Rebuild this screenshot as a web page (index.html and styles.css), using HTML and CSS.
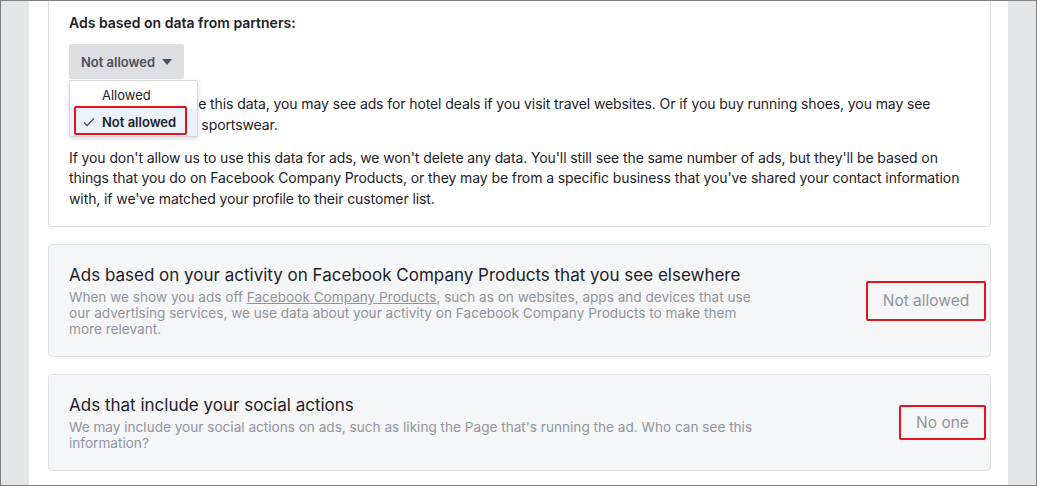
FILE: index.html
```html
<!DOCTYPE html>
<html>
<head>
<meta charset="utf-8">
<link rel="stylesheet" href="styles.css">
</head>
<body>
<div class="frame">
  <div class="gutter"></div>
  <main class="main">
    <section class="card card-top">
      <h3 class="label">Ads based on data from partners:</h3>
      <div class="select-wrap">
        <button class="select">Not allowed <span class="caret"></span></button>
        <div class="menu">
          <div class="menu-item">Allowed</div>
          <div class="menu-item selected">
            <svg class="check" width="12" height="10" viewBox="0 0 12 10"><path d="M1 5.5 L4.2 8.5 L11 1.5" fill="none" stroke="#4b4f56" stroke-width="1.3"/></svg>
            Not allowed
          </div>
          <div class="hl"></div>
        </div>
      </div>
      <p class="para">If you allow us to use this data, you may see ads for hotel deals if you visit travel websites. Or if you buy running shoes, you may see<br>ads from a brand of sportswear.</p>
      <p class="para">If you don't allow us to use this data for ads, we won't delete any data. You'll still see the same number of ads, but they'll be based on things that you do on Facebook Company Products, or they may be from a specific business that you've shared your contact information with, if we've matched your profile to their customer list.</p>
    </section>
    <section class="card card-row">
      <div class="row-text">
        <h4 class="row-title">Ads based on your activity on Facebook Company Products that you see elsewhere</h4>
        <p class="row-desc">When we show you ads off <a class="link">Facebook Company Products</a>, such as on websites, apps and devices that use our advertising services, we use data about your activity on Facebook Company Products to make them more relevant.</p>
      </div>
      <div class="value v1">Not allowed</div>
    </section>
    <section class="card card-row">
      <div class="row-text">
        <h4 class="row-title">Ads that include your social actions</h4>
        <p class="row-desc">We may include your social actions on ads, such as liking the Page that's running the ad. Who can see this information?</p>
      </div>
      <div class="value v2">No one</div>
    </section>
  </main>
  <div class="gutter"></div>
</div>
</body>
</html>
```
FILE: styles.css
```css
html, body { margin: 0; padding: 0; }
body { font-family: Inter, "Liberation Sans", Arial, sans-serif; color: #1d2129; }
.frame {
  width: 1037px; height: 486px; box-sizing: border-box;
  border: 1px solid #7f7f7f; display: flex; overflow: hidden; background: #fff;
}
.gutter { width: 28px; flex: none; background: #e4e5e7; }
.main { flex: 1; padding: 0 17px 0 19px; display: flex; flex-direction: column; gap: 17px; }
.card { border: 1px solid #dddfe2; border-radius: 4px; box-sizing: border-box; }
.card-top { border-top: none; border-radius: 0 0 4px 4px; padding: 13px 20px 17px 20px; }
.label { margin: 0; font-size: 14px; font-weight: 600; line-height: 18px; color: #1d2129; }
.select-wrap { position: relative; margin-top: 12px; height: 35px; }
.select {
  height: 35px; width: 115px; border: none; border-radius: 2px; background: #dcdee2;
  font-family: inherit; font-size: 13px; font-weight: 600; color: #4b4f56;
  padding: 0; display: flex; align-items: center; justify-content: center; gap: 7px;
}
.caret { width: 0; height: 0; border-left: 5px solid transparent; border-right: 5px solid transparent; border-top: 6px solid #4b4f56; margin-top: 1px; }
.menu {
  position: absolute; left: 0; top: 36px; width: 129px; height: 57px; box-sizing: border-box;
  background: #fff; border: 1px solid #d4d6da; border-radius: 2px; box-shadow: 0 2px 4px rgba(0,0,0,0.15);
  padding-top: 2px; z-index: 2;
}
.menu-item { height: 24px; line-height: 24px; font-size: 13px; color: #1d2129; padding-left: 32px; position: relative; }
.menu-item.selected { background: #ecf1fb; font-weight: 600; margin-top: 1px; height: 28px; line-height: 28px; }
.check { position: absolute; left: 13px; top: 9px; }
.hl { position: absolute; left: 4px; top: 25px; width: 113px; height: 29px; box-sizing: border-box; border: 2px solid #e4131e; border-radius: 2px; }
.para { margin: 0; font-size: 14px; letter-spacing: -0.1px; line-height: 20.5px; color: #1d2129; }
.para + .para { margin-top: 12.5px; }
.select-wrap + .para { margin-top: 15px; }
.card-row { background: #f5f6f7; display: flex; align-items: center; padding: 19px 4px 19px 20px; }
.row-text { width: 700px; }
.row-title { margin: 0; font-size: 17px; font-weight: normal; line-height: 22px; color: #1d2129; }
.row-desc { margin: 3px 0 0; font-size: 13.6px; line-height: 16px; color: #90949c; }
.link { color: #90949c; text-decoration: underline; }
.value { margin-left: auto; font-size: 15.5px; color: #90949c; box-sizing: border-box; border: 2px solid #e4131e; border-radius: 2px; display: flex; align-items: center; justify-content: center; }
.v1 { width: 120px; height: 40px; }
.v2 { width: 87px; height: 35px; }
```
